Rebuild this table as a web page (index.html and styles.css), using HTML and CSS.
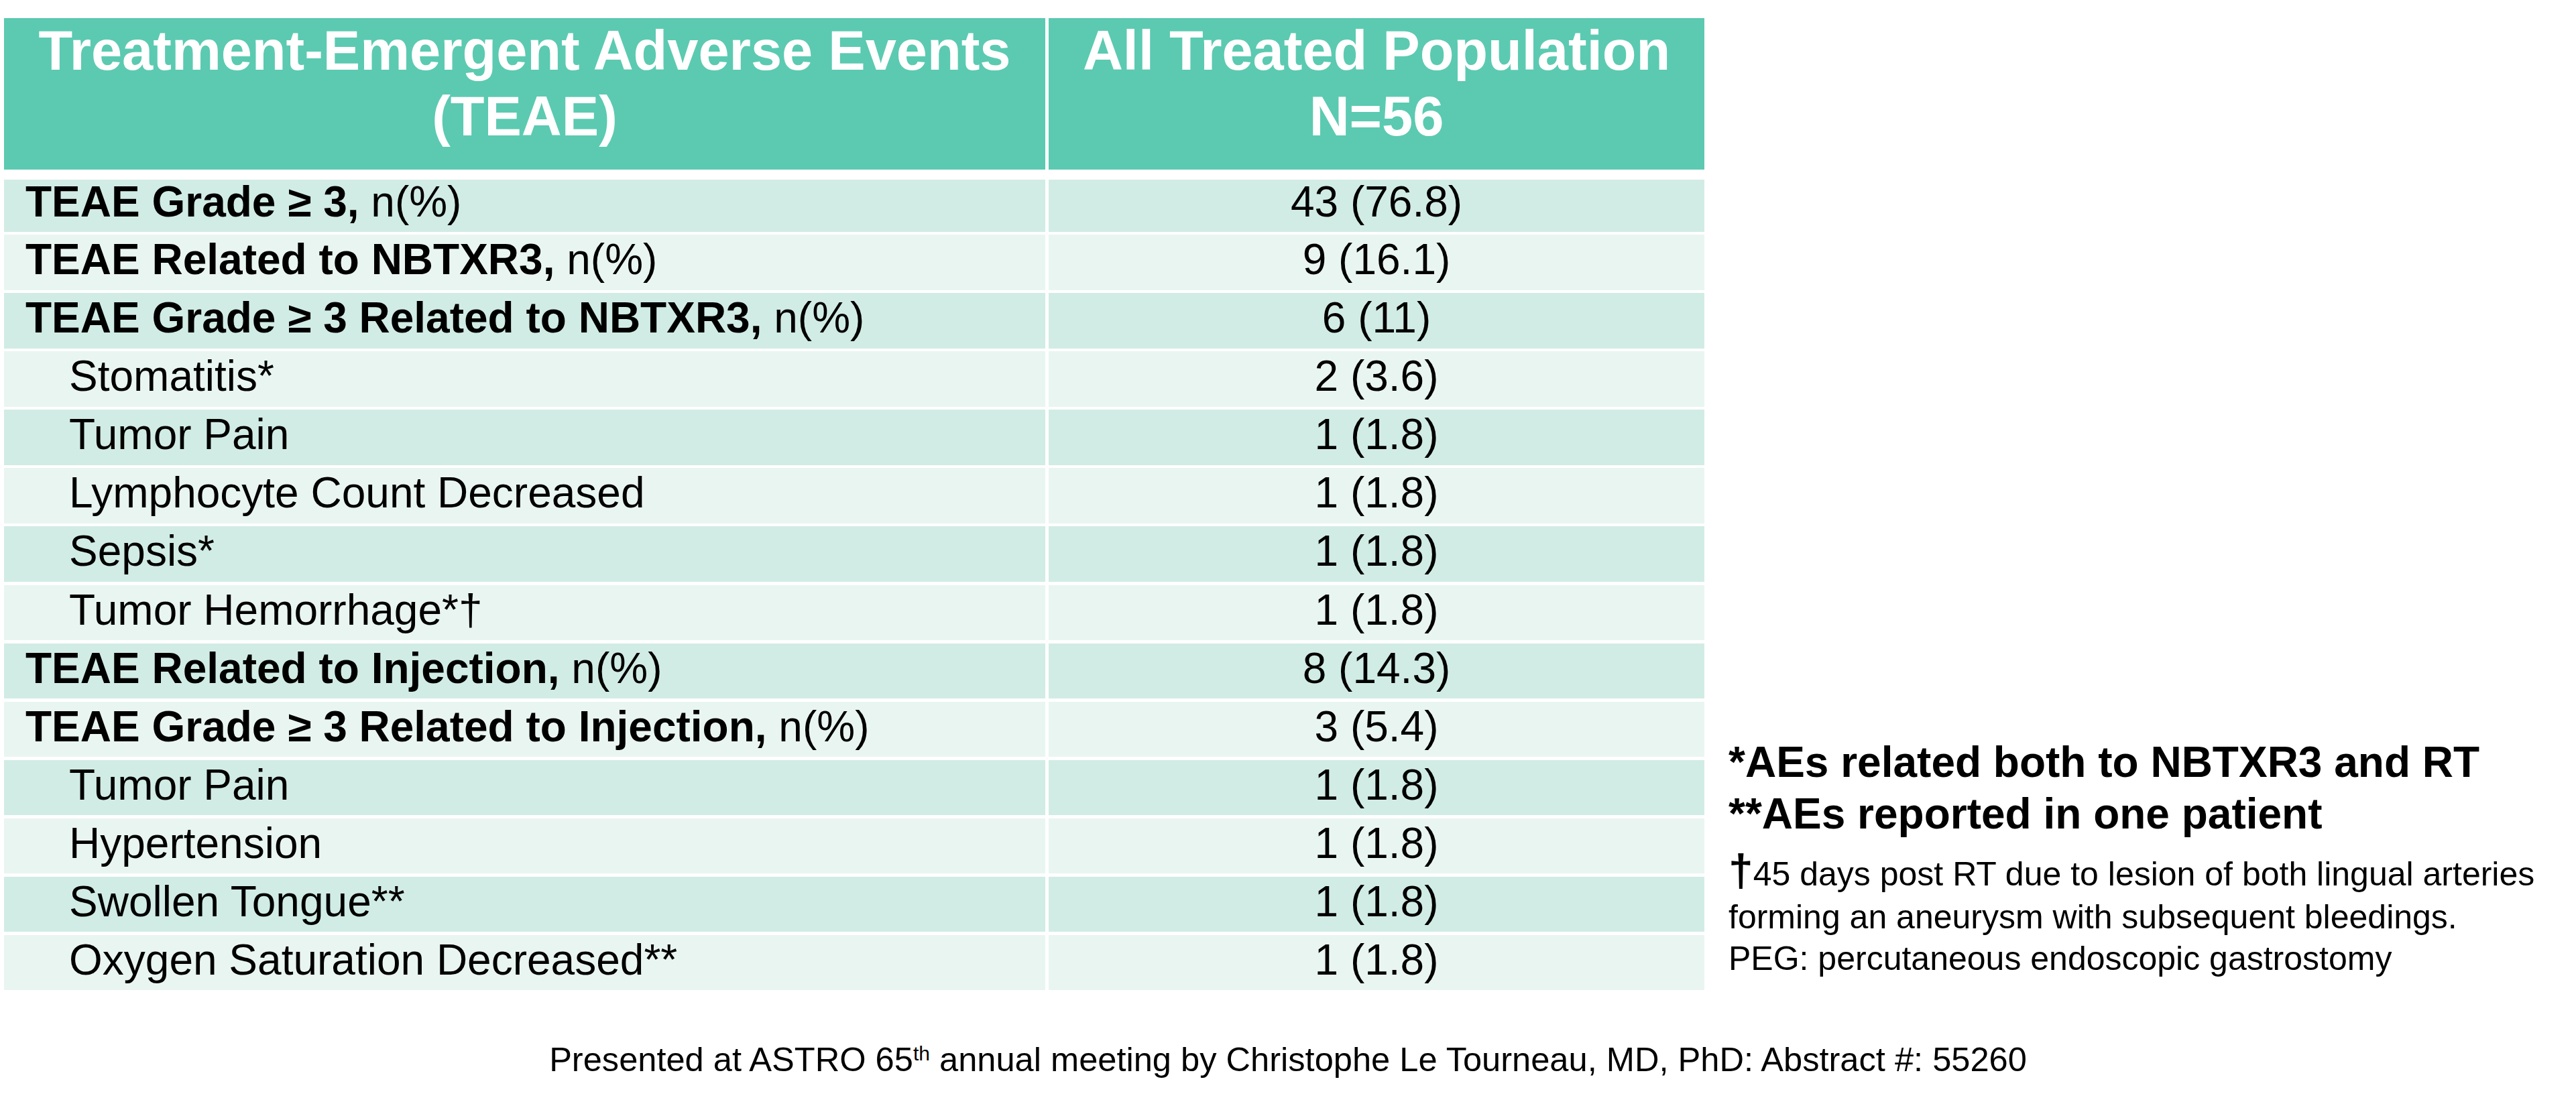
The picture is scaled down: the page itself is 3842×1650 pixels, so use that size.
FILE: index.html
```html
<!DOCTYPE html>
<html lang="en">
<head>
<meta charset="utf-8">
<title>Treatment-Emergent Adverse Events</title>
<link rel="stylesheet" href="styles.css">
</head>
<body>
<div class="main">
  <div class="table">
    <div class="row head">
      <div class="cell">Treatment-Emergent Adverse Events<br>(TEAE)</div>
      <div class="cell">All Treated Population<br>N=56</div>
    </div>
    <div class="row body band1 first">
      <div class="cell label"><b>TEAE Grade ≥ 3,</b> n(%)</div>
      <div class="cell val">43 (76.8)</div>
    </div>
    <div class="row body band2">
      <div class="cell label"><b>TEAE Related to NBTXR3,</b> n(%)</div>
      <div class="cell val">9 (16.1)</div>
    </div>
    <div class="row body band1">
      <div class="cell label"><b>TEAE Grade ≥ 3 Related to NBTXR3,</b> n(%)</div>
      <div class="cell val">6 (11)</div>
    </div>
    <div class="row body band2">
      <div class="cell label indent">Stomatitis*</div>
      <div class="cell val">2 (3.6)</div>
    </div>
    <div class="row body band1">
      <div class="cell label indent">Tumor Pain</div>
      <div class="cell val">1 (1.8)</div>
    </div>
    <div class="row body band2">
      <div class="cell label indent">Lymphocyte Count Decreased</div>
      <div class="cell val">1 (1.8)</div>
    </div>
    <div class="row body band1">
      <div class="cell label indent">Sepsis*</div>
      <div class="cell val">1 (1.8)</div>
    </div>
    <div class="row body band2">
      <div class="cell label indent">Tumor Hemorrhage*†</div>
      <div class="cell val">1 (1.8)</div>
    </div>
    <div class="row body band1">
      <div class="cell label"><b>TEAE Related to Injection,</b> n(%)</div>
      <div class="cell val">8 (14.3)</div>
    </div>
    <div class="row body band2">
      <div class="cell label"><b>TEAE Grade ≥ 3 Related to Injection,</b> n(%)</div>
      <div class="cell val">3 (5.4)</div>
    </div>
    <div class="row body band1">
      <div class="cell label indent">Tumor Pain</div>
      <div class="cell val">1 (1.8)</div>
    </div>
    <div class="row body band2">
      <div class="cell label indent">Hypertension</div>
      <div class="cell val">1 (1.8)</div>
    </div>
    <div class="row body band1">
      <div class="cell label indent">Swollen Tongue**</div>
      <div class="cell val">1 (1.8)</div>
    </div>
    <div class="row body band2">
      <div class="cell label indent">Oxygen Saturation Decreased**</div>
      <div class="cell val">1 (1.8)</div>
    </div>
  </div>
  <div class="notes">
    <div class="note-b">*AEs related both to NBTXR3 and RT</div>
    <div class="note-b">**AEs reported in one patient</div>
    <div class="note-d"><span class="dagger">†</span>45 days post RT due to lesion of both lingual arteries</div>
    <div class="note-s">forming an aneurysm with subsequent bleedings.</div>
    <div class="note-s">PEG: percutaneous endoscopic gastrostomy</div>
  </div>
</div>
<div class="footer">Presented at ASTRO 65<span class="sup">th</span> annual meeting by Christophe Le Tourneau, MD, PhD: Abstract #: 55260</div>
</body>
</html>
```
FILE: styles.css
```css
html, body {
  margin: 0;
  padding: 0;
  background: #ffffff;
}

body {
  width: 3842px;
  height: 1650px;
  overflow: hidden;
  font-family: "Liberation Sans", Arial, sans-serif;
  color: #000000;
}

.main {
  display: flex;
  align-items: flex-end;
  gap: 36px;
  padding: 27px 0 0 6px;
}

.table {
  display: flex;
  flex-direction: column;
  gap: 4.48px;
  width: 2536px;
  flex: none;
}

.row {
  display: grid;
  grid-template-columns: 1553px 978px;
  column-gap: 5px;
}

.head {
  height: 226px;
  margin-bottom: 10.2px;
}

.head .cell {
  background: #5bcab1;
  color: #ffffff;
  font-weight: bold;
  font-size: 83px;
  line-height: 98px;
  text-align: center;
  padding-top: 0;
  white-space: nowrap;
}

.body {
  height: 82.6px;
  font-size: 64px;
  line-height: 75px;
  white-space: nowrap;
}

.body.first {
  height: 78px;
  line-height: 66.8px;
}

.band1 .cell {
  background: #d1ece5;
}

.band2 .cell {
  background: #e9f5f1;
}

.label {
  padding-left: 32px;
}

.label.indent {
  padding-left: 97px;
}

.val {
  text-align: center;
}

.notes {
  margin-bottom: 16px;
  white-space: nowrap;
}

.note-b {
  font-weight: bold;
  font-size: 64px;
  line-height: 77px;
}

.note-d {
  font-size: 50px;
  line-height: 68px;
  margin-top: 17px;
}

.dagger {
  font-size: 66px;
  font-weight: bold;
  line-height: 0;
}

.note-s {
  font-size: 50px;
  line-height: 61.5px;
}

.footer {
  margin-top: 75px;
  text-align: center;
  font-size: 50.6px;
  line-height: 58px;
  white-space: nowrap;
}

.sup {
  font-size: 30px;
  line-height: 0;
  vertical-align: 16px;
}
```
